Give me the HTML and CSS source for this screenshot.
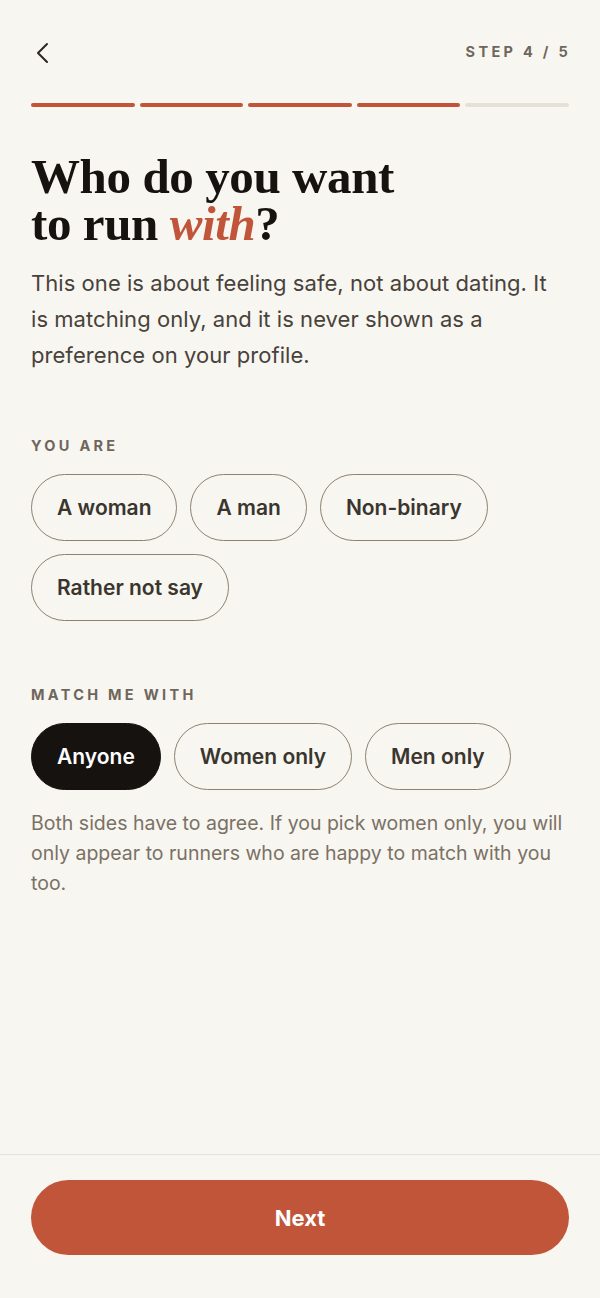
FILE: index.html
```html
<!DOCTYPE html>
<html lang="en">
<head>
<meta charset="utf-8">
<title>Step 4 / 5</title>
<link rel="stylesheet" href="styles.css">
</head>
<body>
<div class="screen">
  <main class="content">
    <header class="topbar">
      <button class="back" aria-label="Back">
        <svg width="16" height="22" viewBox="0 0 16 22" fill="none"><path d="M12 2 L3 11 L12 20" stroke="#2b2722" stroke-width="2" stroke-linecap="round" stroke-linejoin="round"/></svg>
      </button>
      <span class="step">STEP 4 / 5</span>
    </header>
    <div class="progress">
      <span class="seg on"></span><span class="seg on"></span><span class="seg on"></span><span class="seg on"></span><span class="seg"></span>
    </div>
    <h1 class="title"><span class="tline">Who do you want</span><span class="tline">to run <em>with</em>?</span></h1>
    <p class="lead">This one is about feeling safe, not about dating. It is matching only, and it is never shown as a preference on your profile.</p>

    <section class="group first">
      <h2 class="label">YOU ARE</h2>
      <div class="chips">
        <button class="chip">A woman</button>
        <button class="chip">A man</button>
        <button class="chip">Non-binary</button>
        <button class="chip">Rather not say</button>
      </div>
    </section>

    <section class="group">
      <h2 class="label">MATCH ME WITH</h2>
      <div class="chips">
        <button class="chip selected">Anyone</button>
        <button class="chip">Women only</button>
        <button class="chip">Men only</button>
      </div>
      <p class="note">Both sides have to agree. If you pick women only, you will only appear to runners who are happy to match with you too.</p>
    </section>
  </main>
  <footer class="footer">
    <button class="next">Next</button>
  </footer>
</div>
</body>
</html>
```

FILE: styles.css
```css
* { box-sizing: border-box; }
html, body { margin: 0; padding: 0; }
body {
  background: #f8f6f0;
  font-family: Inter, "Noto Sans", sans-serif;
  color: #2b2722;
}
.screen {
  width: 600px;
  height: 1298px;
  display: flex;
  flex-direction: column;
}
.content {
  flex: 1;
  padding: 0 31px;
}
.topbar {
  height: 105px;
  display: flex;
  justify-content: space-between;
  align-items: flex-start;
  padding-top: 42px;
}
.back {
  border: 0;
  background: none;
  padding: 0 0 0 4px;
  margin: 0;
  height: 22px;
  cursor: pointer;
}
.step {
  font-size: 14.5px;
  font-weight: 700;
  letter-spacing: 3.3px;
  color: #6e665c;
  margin-right: -2px;
  margin-top: 1px;
}
.progress {
  display: flex;
  gap: 5px;
  margin-top: -2px;
}
.seg {
  flex: 1;
  height: 4px;
  border-radius: 2px;
  background: #e4e1d6;
}
.seg.on { background: #c0553a; }
.title {
  font-family: "Liberation Serif", "Times New Roman", serif;
  font-weight: 700;
  font-size: 49px;
  line-height: 47px;
  letter-spacing: -0.4px;
  color: #15120f;
  margin: 46px 0 0;
  display: flex;
  flex-direction: column;
}
.tline {
  display: block;
  height: 47px;
  line-height: 47px;
}
.title em {
  color: #c0553a;
  font-style: italic;
}
.lead {
  font-size: 22px;
  line-height: 36px;
  letter-spacing: 0.05px;
  color: #48423b;
  margin: 18px 0 0;
}
.group { margin-top: 65px; }
.group.first { margin-top: 64px; }
.label {
  font-size: 14.5px;
  font-weight: 700;
  letter-spacing: 3.3px;
  color: #6e665c;
  margin: 0 0 20px;
  line-height: 17px;
}
.chips {
  display: flex;
  flex-wrap: wrap;
  gap: 13px 13px;
}
.chip {
  font-family: Inter, "Noto Sans", sans-serif;
  font-size: 21px;
  font-weight: 600;
  color: #3a352f;
  height: 67px;
  padding: 0 25px;
  border: 1.5px solid #8c8270;
  border-radius: 34px;
  background: transparent;
}
.chip.selected {
  background: #161210;
  border-color: #161210;
  color: #ffffff;
}
.note {
  font-size: 19.5px;
  line-height: 30px;
  color: #7a7166;
  margin: 18px 0 0;
}
.footer {
  border-top: 1.5px solid #e5e2da;
  padding: 25px 31px 43px;
}
.next {
  width: 100%;
  height: 75px;
  border: 0;
  border-radius: 38px;
  background: #c0553a;
  color: #ffffff;
  font-family: Inter, "Noto Sans", sans-serif;
  font-size: 22px;
  font-weight: 700;
}
```
